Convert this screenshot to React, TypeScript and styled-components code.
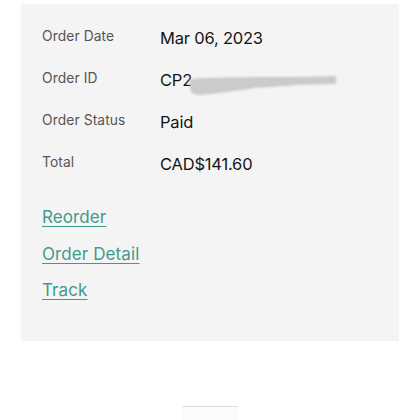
import React from "react";
import styled, { createGlobalStyle } from "styled-components";

const Global = createGlobalStyle`
  html, body { margin: 0; padding: 0; background: #ffffff; }
  body { font-family: Inter, "Open Sans", sans-serif; -webkit-font-smoothing: antialiased; }
`;

const Page = styled.div`
  width: 420px;
  height: 420px;
  overflow: hidden;
  display: flex;
  flex-direction: column;
`;

const Panel = styled.section`
  margin: 4px 0 0 21px;
  width: 378px;
  height: 337px;
  flex-shrink: 0;
  box-sizing: border-box;
  background: #f4f4f4;
  padding: 22px 0 0 21px;
  display: flex;
  flex-direction: column;
`;

const InfoGrid = styled.dl`
  margin: 0;
  display: grid;
  grid-template-columns: 118px 1fr;
  grid-auto-rows: 42px;
  align-items: start;
`;

const Label = styled.dt`
  font-size: 13.8px;
  line-height: 20px;
  color: #555555;
  letter-spacing: 0.1px;
`;

const Value = styled.dd`
  margin: 0;
  position: relative;
  font-size: 16.5px;
  line-height: 24px;
  color: #141414;
  letter-spacing: -0.2px;
`;

const Smudge = styled.svg`
  position: absolute;
  left: 26px;
  top: 4px;
  width: 154px;
  height: 26px;
`;

const Links = styled.nav`
  margin-top: 5px;
  display: flex;
  flex-direction: column;
  align-items: flex-start;
`;

const LinkItem = styled.a`
  font-size: 17px;
  line-height: 36.5px;
  color: #3f9a8c;
  text-decoration: underline;
  text-underline-offset: 3px;
  text-decoration-thickness: 1px;
  letter-spacing: 0.1px;
  cursor: pointer;
`;

const BottomButton = styled.button`
  align-self: center;
  margin-top: 65px;
  width: 56px;
  height: 30px;
  flex-shrink: 0;
  background: #fbfbfb;
  border: none;
  border-top: 1px solid #dedede;
  border-radius: 2px;
  box-shadow: 0 0 1px rgba(0, 0, 0, 0.08);
`;

const rows = [
  { label: "Order Date", value: "Mar 06, 2023" },
  { label: "Order ID", value: "CP2", redacted: true },
  { label: "Order Status", value: "Paid" },
  { label: "Total", value: "CAD$141.60" },
];

export default function App() {
  return (
    <>
      <Global />
      <Page>
        <Panel>
          <InfoGrid>
            {rows.map((r) => (
              <React.Fragment key={r.label}>
                <Label>{r.label}</Label>
                <Value>
                  {r.value}
                  {r.redacted && (
                    <Smudge viewBox="0 0 154 26">
                      <defs>
                        <filter id="b" x="-10%" y="-50%" width="120%" height="200%">
                          <feGaussianBlur stdDeviation="1.3" />
                        </filter>
                      </defs>
                      <g fill="#cbcbcb" filter="url(#b)">
                        <path d="M4 7 C30 5 70 5 110 5 L150 4 L150 12 C130 13 115 12 100 14 C85 15 75 16 60 16 L60 8 Z" />
                        <path d="M4 7 C25 6 45 6 65 7 L65 17 C45 19 30 22 14 23 C7 23 4 20 4 16 Z" />
                      </g>
                    </Smudge>
                  )}
                </Value>
              </React.Fragment>
            ))}
          </InfoGrid>
          <Links>
            <LinkItem>Reorder</LinkItem>
            <LinkItem>Order Detail</LinkItem>
            <LinkItem>Track</LinkItem>
          </Links>
        </Panel>
        <BottomButton aria-label="more" />
      </Page>
    </>
  );
}
